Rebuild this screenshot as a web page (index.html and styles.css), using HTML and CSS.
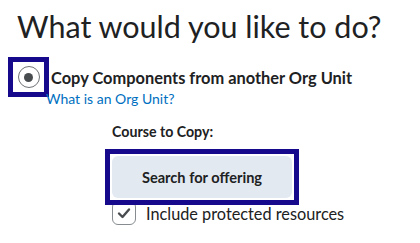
FILE: index.html
```html
<!DOCTYPE html>
<html>
<head>
<meta charset="utf-8">
<link rel="stylesheet" href="styles.css">
</head>
<body>
<div class="page">
  <h1 class="title">What would you like to do?</h1>
  <div class="radio-row">
    <span class="radio-focus"><span class="radio"><span class="radio-dot"></span></span></span>
    <span class="radio-label">Copy Components from another Org Unit</span>
  </div>
  <a class="help-link" href="#">What is an Org Unit?</a>
  <div class="section">
    <div class="field-label">Course to Copy:</div>
    <button class="search-btn" type="button">Search for offering</button>
    <label class="check-row">
      <span class="checkbox"><svg width="16" height="16" viewBox="0 0 16 16"><path d="M3 8.5 L6.5 12 L13 4.5" fill="none" stroke="#494c4e" stroke-width="2.4" stroke-linecap="round" stroke-linejoin="round"/></svg></span>
      <span class="check-text">Include protected resources</span>
    </label>
  </div>
</div>
</body>
</html>
```
FILE: styles.css
```css
html, body { margin: 0; padding: 0; background: #fff; }
body { font-family: Lato, "Noto Sans", sans-serif; color: #202122; }
.page { width: 420px; height: 243px; overflow: hidden; }
.title {
  margin: 0;
  padding: 8px 0 0 17px;
  font-size: 30.5px;
  font-weight: 400;
  line-height: 36px;
  color: #202122;
}
.radio-row {
  display: flex;
  align-items: center;
  margin-top: 13px;
}
.radio-focus {
  margin-left: 8px;
  width: 31px;
  height: 30px;
  border: 5px solid #16098c;
  display: flex;
  align-items: center;
  justify-content: center;
}
.radio {
  width: 20px;
  height: 20px;
  border: 1.5px solid #6e7376;
  border-radius: 50%;
  display: flex;
  align-items: center;
  justify-content: center;
}
.radio-dot {
  width: 9px;
  height: 9px;
  border-radius: 50%;
  background: #494c4e;
}
.radio-label {
  margin-left: 2px;
  font-size: 16.4px;
  font-weight: 700;
}
.help-link {
  display: block;
  margin-top: -7px;
  padding-left: 46px;
  font-size: 14px;
  line-height: 17px;
  color: #006fbf;
  text-decoration: none;
}
.section { padding-left: 112px; }
.field-label {
  margin-top: 16px;
  font-size: 14.2px;
  line-height: 17px;
  font-weight: 700;
}
.search-btn {
  display: block;
  margin-top: 16px;
  width: 180px;
  height: 42px;
  border: 0;
  border-radius: 6px;
  background: #e3e9f1;
  font-family: Lato, "Noto Sans", sans-serif;
  font-size: 14.6px;
  font-weight: 700;
  color: #202122;
  outline: none;
  position: relative;
  z-index: 1;
}
.search-btn::after {
  content: "";
  position: absolute;
  top: -7px;
  left: -7px;
  right: -7px;
  bottom: -7px;
  border: 5px solid #16098c;
}
.check-row {
  display: flex;
  align-items: center;
  margin-top: 3px;
  gap: 10px;
}
.checkbox {
  width: 22px;
  height: 22px;
  border: 1px solid #868c8f;
  border-radius: 6px;
  display: flex;
  align-items: center;
  justify-content: center;
}
.check-text { font-size: 16.3px; }
```
